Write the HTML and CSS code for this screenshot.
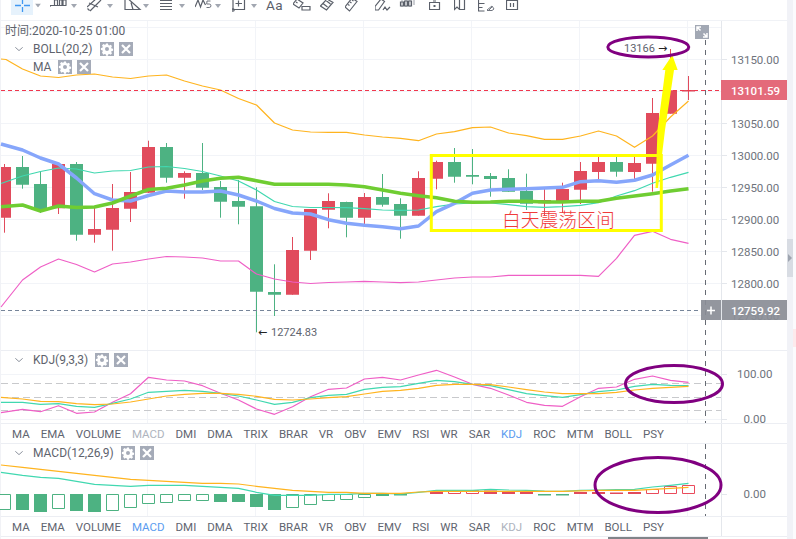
FILE: index.html
```html
<!DOCTYPE html>
<html lang="zh">
<head>
<meta charset="utf-8">
<title>K线图</title>
<link rel="stylesheet" href="styles.css">
</head>
<body>
<svg class="defs" width="0" height="0" aria-hidden="true">
  <symbol id="gear" viewBox="0 0 14 14">
    <path fill="#fff" fill-rule="evenodd" d="M6 1.6h2l.3 1.5 1 .4 1.3-.8 1.4 1.4-.8 1.3.4 1 1.5.3v2l-1.500.3-.4 1 .8 1.3-1.400 1.400-1.300-.8-1 .4-.3 1.500H6l-.3-1.500-1-.4-1.300.8L2 10.600l.8-1.300-.4-1L.9 8V6l1.500-.3.4-1L2 3.400 3.400 2l1.300.8 1-.4zM7 5a2 2 0 1 0 0 4 2 2 0 0 0 0-4z"/>
  </symbol>
  <symbol id="cross" viewBox="0 0 14 14">
    <path stroke="#fff" stroke-width="2.200" d="M3 3l8 8M11 3l-8 8"/>
  </symbol>
  <symbol id="chev" viewBox="0 0 8 4">
    <path fill="none" stroke="#8d939e" d="M.3.3L4 3.600 7.700.3"/>
  </symbol>
  <symbol id="caret" viewBox="0 0 6 4">
    <path fill="#a2a7b1" d="M0 0h6L3 4z"/>
  </symbol>
</svg>

<div class="app">
  <div class="main">
    <header class="toolbar">
      <svg class="tool" width="39" height="20" viewBox="0 0 39 20"><rect class="tool-active" width="22" height="15"/><path class="tool-blue" d="M4 5.500h6M13 5.500h6M11.500 0v4M11.500 7v5"/><use href="#caret" x="24" y="3.500" width="6" height="4"/></svg>
      <svg class="tool" width="37" height="20" viewBox="0 0 37 20"><path class="ink" d="M0 7v-2M.5 5.500h16M4.500 5V0h3v5M9.500 5V0h2.500v5M13 5V0h3v5"/><use href="#caret" x="21" y="4" width="6" height="4"/></svg>
      <svg class="tool" width="37" height="20" viewBox="0 0 37 20"><path class="ink" d="M0 7L10-2M3 11L14 0M2 3l9 4M.5 8.500l2 2"/><use href="#caret" x="20" y="4" width="6" height="4"/></svg>
      <svg class="tool" width="36" height="20" viewBox="0 0 36 20"><path class="ink" d="M1 -4V9.500H16L1-4M7 2.500l2 7"/><use href="#caret" x="19" y="4" width="6" height="4"/></svg>
      <svg class="tool" width="35" height="20" viewBox="0 0 35 20"><path class="ink" d="M0 .5h12M0 3.500h12M0 6.500h12M0 9.500h12"/><use href="#caret" x="19" y="4" width="6" height="4"/></svg>
      <svg class="tool" width="37" height="20" viewBox="0 0 37 20"><path class="ink" d="M0 7L3 0l2.500 7L8 0l2.500 5"/><path class="ink-thin" d="M15.500 1H12l-.3 3h2.500a1.500 1.500 0 0 1 0 3.500H11.500"/><use href="#caret" x="20" y="4" width="6" height="4"/></svg>
      <svg class="tool" width="34" height="20" viewBox="0 0 34 20"><path class="ink" d="M1 -1V9.500H12.500V-1M3.500 3.500h6.500M6.500 .5v6"/><circle class="ink" cx="1" cy="10" r="1.200"/><use href="#caret" x="19" y="4" width="6" height="4"/></svg>
      <span class="tool-text">Aa</span>
      <svg class="tool" width="27" height="20" viewBox="0 0 27 20"><path class="ink" d="M0 4L4-1l6 4-4 5zM3 2l1.500 1M5.500 0l1.500 1M9 10h8V6.500H9z"/></svg>
      <svg class="tool" width="25" height="20" viewBox="0 0 25 20"><path class="ink" d="M.5 6L7-1l6 3.500-6.500 7.500zM3 3.500l4.500 3.500M6 .5l4.500 3.500"/></svg>
      <svg class="tool" width="30" height="20" viewBox="0 0 30 20"><path class="ink" d="M0 7L7-2l5 3.500-7.500 9.500zM3 4.500l1.500 1M5 2l1.500 1M7 0l1.500 1"/></svg>
      <svg class="tool" width="22" height="20" viewBox="0 0 22 20"><path class="ink" d="M0 6.500L6-1l3.500 2.500-6 8.500H0zM8 10l2-3 2 3 3-3"/></svg>
      <svg class="tool" width="32" height="20" viewBox="0 0 32 20"><path class="ink-dot" d="M5 0v7M9 0v7M13 0v7M17 0v5"/><path class="ink" d="M3.500 2h3v4h-3zM7.500 1h3v5h-3zM11.500 1h3v5h-3z"/></svg>
      <svg class="tool" width="25" height="20" viewBox="0 0 25 20"><path class="ink" d="M.5 2.500h10v7H.5zM4 1h3"/><rect class="ink-fill" x="4.500" y="5" width="2" height="2"/></svg>
      <svg class="tool" width="24" height="20" viewBox="0 0 24 20"><path class="ink" d="M.5-2V9.500L3 7l2.500 2.500h5V-2M5.500 0v9"/></svg>
      <svg class="tool" width="28" height="20" viewBox="0 0 28 20"><path class="ink" d="M.5-1v12h6M.5 3.500h6M.5 7.500h4M10-1h5v1"/><path class="ink-thin" d="M9 10l5-4 2 3-2 1.500H9M11 10l3-3"/></svg>
      <svg class="tool" width="15" height="20" viewBox="0 0 15 20"><path class="ink" d="M.5.500h11v9H.5zM4.500 3v4M7.500 3v4"/></svg>
    </header>

    <section class="pane pane-main">
      <svg class="plot" width="787" height="329" viewBox="0 21 787 329">
        <path class="grid" d="M1 27.500H721M1 59.500H721M1 91.500H721M1 123.500H721M1 155.500H721M1 187.500H721M1 219.500H721M1 251.500H721M1 283.500H721M1 315.500H721M147.500 21V350M255.500 21V350M363.500 21V350M471.500 21V350M579.500 21V350M687.500 21V350"/>
        <path class="axis-line" d="M721.500 21V350"/>
        <path class="tick" d="M722 59.500h5M722 123.500h5M722 155.500h5M722 187.500h5M722 219.500h5M722 251.500h5M722 283.500h5"/>

        <path class="wick-red" d="M4.500 164V232.700M58.500 163V214M94.500 207V242.700M112.500 184V250.700M130.500 172V222M148.500 140.700V193M184.500 171.300V198.700M292.500 237V294.700M310.500 209V260M328.500 193.300V228.300M364.500 193V224.300M418.500 171.300V215.700M436.500 160.700V189.300M544.500 189V216M562.500 182.700V213M580.500 162V204M598.500 156.700V180M634.500 156.700V180M652.500 98V191.700M670.500 49V113.700M688.500 76V100"/>
        <path class="body-red" d="M1 167h10v50.700H1zM52 164h13v44.300H52zM88 229h13v5.700H88zM106 208h13v21.700H106zM124 192h13v16.700H124zM142 147h13v45.700H142zM178 173h13v4.700H178zM286 250h13v44.700H286zM304 209h13v41.700H304zM322 201h13v8.700H322zM358 197h13v20.700H358zM412 178h13v37.700H412zM430 162h13v16.700H430zM538 200h13v3.300H538zM556 189h13v12.700H556zM574 171h13v18.700H574zM592 162h13v10H592zM628 163h13v9H628zM646 113h13v50.700H646zM664 90.300h13v23.400H664zM682 90h13v1.500H682z"/>
        <path class="wick-green" d="M22.500 156V188.700M40.500 172V213M76.500 162V240.700M166.500 143V182.700M202.500 143V190M220.500 181V217.700M238.500 180V224.300M256.500 187.300V332.300M274.500 264.300V316M346.500 201.700V237.300M382.500 174V206.700M400.500 198.300V238.700M454.500 148V182.700M472.500 149V184.300M490.500 173V196.700M508.500 169.300V191.700M526.500 173.700V210M616.500 156.700V176.700"/>
        <path class="body-green" d="M16 167h13v17.700H16zM34 184h13v25.300H34zM70 164h13v70.700H70zM160 147h13v30.700H160zM196 173h13v14.700H196zM214 187h13v14.700H214zM232 201h13v5.700H232zM250 206.300h13v85.400H250zM268 292h13v2.700H268zM340 202h13v15.700H340zM376 197h13v7.700H376zM394 204h13v11.700H394zM448 162h13v14.700H448zM466 175h13v1.700H466zM484 176h13v3H484zM502 178h13v13.700H502zM520 191h13v12.700H520zM610 162h13v9.700H610z"/>

        <polyline class="line-orange" points="1,59 6,59.500 22.500,69 40.500,76 58.500,77.500 76.500,75 94.500,74 112.500,77 130.500,78.500 148.500,76 166.500,75 184.500,81 202.500,86 220.500,90 238.500,98.500 256.500,105 274.500,123 292.500,130 310.500,132 328.500,132.300 346.500,132.300 364.500,135 382.500,137 400.500,138.300 418.500,140.700 436.500,134 454.500,131.700 472.500,127.700 490.500,127 508.500,133 526.500,135.700 544.500,139.300 562.500,139.300 580.500,136 598.500,131 616.500,136 634.500,147.300 652.500,136 670.500,117 688.500,101"/>
        <polyline class="line-pink" points="1,307 22.500,280 40.500,267 58.500,259 76.500,264.500 94.500,272 112.500,264 130.500,262 148.500,259 166.500,256.500 184.500,257 202.500,258 220.500,261 238.500,261 256.500,274 274.500,279 292.500,282 310.500,283.500 328.500,282.500 346.500,282 364.500,281.300 382.500,282 400.500,282.700 418.500,282 436.500,280 454.500,278 472.500,277 490.500,277 508.500,275.300 526.500,275.300 544.500,275.300 562.500,275.300 580.500,275.300 598.500,276.300 616.500,258.300 634.500,235.300 652.500,231.300 670.500,239.300 688.500,243.300"/>
        <polyline class="line-teal" points="1,183.500 22.500,176 40.500,171.500 58.500,168 76.500,169 94.500,173 112.500,171 130.500,170.500 148.500,167 166.500,166.500 184.500,168.500 202.500,171.500 220.500,176 238.500,181 256.500,190 274.500,201.500 292.500,206.500 310.500,207.500 328.500,207.500 346.500,207.700 364.500,208.700 382.500,210 400.500,210.300 418.500,210 436.500,206.700 454.500,204 472.500,203 490.500,203 508.500,204.700 526.500,206.700 544.500,207.300 562.500,206.700 580.500,205.300 598.500,202.700 616.500,196 634.500,190.700 652.500,183.300 670.500,177.300 688.500,172.300"/>
        <polyline class="line-blue" points="1,144 22.500,150 40.500,158 58.500,164 76.500,178 94.500,193.700 112.500,200 130.500,201 148.500,195.500 166.500,191 184.500,192 202.500,192 220.500,191 238.500,195 256.500,201 274.500,208.500 292.500,213 310.500,214 328.500,219.700 346.500,223.300 364.500,225.300 382.500,226.700 400.500,228.700 418.500,226 436.500,211.700 454.500,203.300 472.500,193.300 490.500,190 508.500,189.300 526.500,188.700 544.500,188 562.500,187.300 580.500,181.700 598.500,180.700 616.500,182.300 634.500,180.300 652.500,175 670.500,165 688.500,155.300"/>
        <polyline class="line-green" points="1,206.700 22.500,205 40.500,211 58.500,206 76.500,207.500 94.500,207 112.500,203 130.500,196 148.500,189.500 166.500,188.300 184.500,185 202.500,181 220.500,178.300 238.500,177.300 256.500,180.700 274.500,184.300 292.500,184.300 310.500,184.300 328.500,184.300 346.500,185 364.500,186.700 382.500,190 400.500,193.300 418.500,195.700 436.500,197.700 454.500,201.300 472.500,202.300 490.500,202 508.500,201.300 526.500,201.300 544.500,202 562.500,202 580.500,201.300 598.500,201.300 616.500,198.300 634.500,196 652.500,193.700 670.500,191 688.500,188.700"/>

        <path class="dash-red" d="M1 90.500H721"/>
        <path class="dash-slate" d="M1 310.500H701"/>
        <path class="dash-dark" d="M705.500 40V350"/>

        <rect class="mark-box" x="431.300" y="155.500" width="230" height="75"/>
        <polygon class="mark-arrow" points="665.300,70 657.500,130 655.500,188 658,188 665,130 674,70 677.700,70 672.300,55 662.300,70"/>
        <ellipse class="mark-ring" cx="648.300" cy="47" rx="40.500" ry="10"/>

        <text class="val" x="624" y="52">13166</text>
        <text class="val-arrow" x="658" y="52">→</text>
        <text class="val-arrow" x="258" y="336">←</text>
        <text class="val" x="271" y="336">12724.83</text>

        <text class="tick-label" x="731" y="63.500">13150.00</text>
        <text class="tick-label" x="731" y="127.500">13050.00</text>
        <text class="tick-label" x="731" y="159.500">13000.00</text>
        <text class="tick-label" x="731" y="191.500">12950.00</text>
        <text class="tick-label" x="731" y="223.500">12900.00</text>
        <text class="tick-label" x="731" y="255.500">12850.00</text>
        <text class="tick-label" x="731" y="287.500">12800.00</text>
        <text class="tick-label" x="731" y="320">12750.00</text>

        <rect class="tag-red" x="721" y="80" width="66" height="20"/>
        <text class="tag-text" x="731" y="94.500">13101.59</text>
        <rect class="tag-gray" x="722" y="300" width="65" height="20"/>
        <rect class="tag-gray" x="701" y="300" width="20" height="20"/>
        <text class="tag-text" x="731" y="314.500">12759.92</text>
        <path class="tag-plus" d="M707 310.500h8M711 306.500v8"/>

        <rect class="btn-expand" x="695" y="25" width="14" height="14"/>
        <path class="btn-expand-glyph" d="M697 31v-4h4M707 33v4h-4M697.500 27.500l3 3M706.500 36.500l-3-3"/>
      </svg>
      <div class="overlay-time">时间:2020-10-25 01:00</div>
      <div class="legend legend-main">
        <div class="legend-row">
          <svg class="chev" width="8" height="4"><use href="#chev"/></svg>
          <span class="legend-name">BOLL(20,2)</span>
          <span class="legend-btn"><svg width="14" height="14"><use href="#gear"/></svg></span>
          <span class="legend-btn"><svg width="14" height="14"><use href="#cross"/></svg></span>
        </div>
        <div class="legend-row">
          <span class="chev-gap"></span>
          <span class="legend-name">MA</span>
          <span class="legend-btn"><svg width="14" height="14"><use href="#gear"/></svg></span>
          <span class="legend-btn"><svg width="14" height="14"><use href="#cross"/></svg></span>
        </div>
      </div>
      <div class="note">白天震荡区间</div>
    </section>

    <section class="pane pane-sub">
      <svg class="plot" width="787" height="72" viewBox="0 351 787 72">
        <path class="grid" d="M1 374.500H721M1 419.500H721M147.500 351V423M255.500 351V423M363.500 351V423M471.500 351V423M579.500 351V423M687.500 351V423"/>
        <path class="axis-line" d="M721.500 351V423"/>
        <path class="tick" d="M722 374.500h5M722 419.500h5"/>
        <path class="dash-gray" d="M1 383.500H721M1 397.500H721M1 410.500H721"/>
        <polyline class="line-pink" points="1,412.700 22.500,409.300 40.500,411.700 58.500,405.700 76.500,413.300 94.500,412 112.500,402.300 130.500,393.700 148.500,377.300 166.500,380 184.500,381 202.500,385.700 220.500,393.300 238.500,400 256.500,409 274.500,414.300 292.500,406.700 310.500,396.700 328.500,389.300 346.500,388 364.500,379 382.500,377.300 400.500,380 418.500,375 436.500,370.300 454.500,377 472.500,384.300 490.500,388.300 508.500,395 526.500,402.300 544.500,405.300 562.500,406.300 580.500,396.700 598.500,388.300 616.500,387 634.500,379.300 652.500,376 670.500,380.300 688.500,382.300"/>
        <polyline class="line-teal" points="1,402.300 22.500,402.300 40.500,404.300 58.500,403.700 76.500,406.300 94.500,407.300 112.500,403.300 130.500,399 148.500,392.300 166.500,391.300 184.500,390.300 202.500,391.300 220.500,393.300 238.500,396 256.500,400 274.500,404.300 292.500,402.300 310.500,397.700 328.500,395.300 346.500,394.300 364.500,389.300 382.500,387.300 400.500,386.700 418.500,383.300 436.500,380.300 454.500,381.700 472.500,384.300 490.500,385.700 508.500,389.700 526.500,393.700 544.500,395.700 562.500,397.300 580.500,394.700 598.500,391.700 616.500,390 634.500,386.300 652.500,384.300 670.500,385.300 688.500,385.700"/>
        <polyline class="line-orange" points="1,397.300 22.500,399 40.500,401.300 58.500,401.700 76.500,403.700 94.500,404.700 112.500,404 130.500,402 148.500,399 166.500,396 184.500,394.300 202.500,393.300 220.500,393.300 238.500,394.300 256.500,396.300 274.500,399.300 292.500,400 310.500,399 328.500,397.700 346.500,396.700 364.500,394 382.500,391.300 400.500,390.300 418.500,388.300 436.500,385.300 454.500,384.300 472.500,384.300 490.500,384.700 508.500,387 526.500,389.700 544.500,392 562.500,393.700 580.500,393.700 598.500,393.700 616.500,392.300 634.500,390 652.500,388.300 670.500,387.300 688.500,386.300"/>
        <path class="dash-dark" d="M705.500 351V423"/>
        <ellipse class="mark-ring" cx="674" cy="384" rx="48.500" ry="18.500"/>
        <text class="tick-label" x="737" y="378">100.00</text>
        <text class="tick-label" x="743.500" y="423">0.00</text>
      </svg>
      <div class="legend legend-sub">
        <div class="legend-row">
          <svg class="chev" width="8" height="4"><use href="#chev"/></svg>
          <span class="legend-name">KDJ(9,3,3)</span>
          <span class="legend-btn"><svg width="14" height="14"><use href="#gear"/></svg></span>
          <span class="legend-btn"><svg width="14" height="14"><use href="#cross"/></svg></span>
        </div>
      </div>
    </section>

    <nav class="tabs">
      <span>MA</span><span>EMA</span><span>VOLUME</span><span class="tab-muted">MACD</span><span>DMI</span><span>DMA</span><span>TRIX</span><span>BRAR</span><span>VR</span><span>OBV</span><span>EMV</span><span>RSI</span><span>WR</span><span>SAR</span><span class="tab-active">KDJ</span><span>ROC</span><span>MTM</span><span>BOLL</span><span>PSY</span>
    </nav>

    <section class="pane pane-sub">
      <svg class="plot" width="787" height="72" viewBox="0 444 787 72">
        <path class="grid" d="M147.500 444V516M255.500 444V516M363.500 444V516M471.500 444V516M579.500 444V516M687.500 444V516"/>
        <path class="axis-line" d="M721.500 444V516"/>
        <path class="tick" d="M722 494.500h5"/>
        <path class="hist-open-green" d="M-2 494.500h12.500v15H-2zM52.500 494.500h12v14h-12zM106.500 494.500h12v16h-12zM124.500 494.500h12v13h-12zM142.500 494.500h12v9h-12zM160.500 494.500h12v8h-12zM178.500 494.500h12v6h-12zM196.500 494.500h12v6h-12zM286.500 494.500h12v13h-12zM304.500 494.500h12v10h-12zM322.500 494.500h12v6h-12zM340.500 494.500h12v5h-12zM358.500 494.500h12v3h-12z"/>
        <path class="body-green" d="M16 494h13v16H16zM34 494h13v18H34zM70 494h13v17H70zM88 494h13v18H88zM214 494h13v8H214zM232 494h13v8H232zM250 494h13v13H250zM268 494h13v16H268zM376 494h13v2H376zM394 494h13v1.500H394zM538 494h13v1.500H538zM556 494h13v1.500H556z"/>
        <path class="body-red" d="M430 492h13v2H430zM484 490.500h13v3.500H484zM502 492h13v2H502zM520 492h13v2H520zM574 492h13v2H574zM592 492h13v2H592zM610 492.500h13v1.500H610zM628 492h13v2H628z"/>
        <path class="hist-open-red" d="M448.500 490.500h12v3h-12zM466.500 490.500h12v3h-12zM646.500 489.500h12v4h-12zM664.500 486.500h12v7h-12zM682.500 485.500h12v8h-12z"/>
        <polyline class="line-teal" points="1,472.300 22.500,475.300 40.500,477.300 58.500,478.300 76.500,481.300 94.500,484.300 112.500,485.300 130.500,486.300 148.500,485.300 166.500,485.300 184.500,485.300 202.500,486.300 220.500,487.300 238.500,488.300 256.500,492.300 274.500,495.300 292.500,495.300 310.500,495.300 328.500,494.300 346.500,494.300 364.500,493.300 382.500,493.300 400.500,494 418.500,492.300 436.500,490.300 454.500,490.300 472.500,490.300 490.500,489.300 508.500,490 526.500,490.300 544.500,491 562.500,491.300 580.500,490.300 598.500,490 616.500,489.500 634.500,489.300 652.500,487 670.500,485.300 688.500,483.300"/>
        <polyline class="line-orange" points="1,465 22.500,467.300 40.500,469.300 58.500,471.300 76.500,473.300 94.500,475.300 112.500,477.300 130.500,479.300 148.500,480.300 166.500,481.300 184.500,482.300 202.500,483.300 220.500,483.300 238.500,484 256.500,486.300 274.500,488.300 292.500,490.300 310.500,491.300 328.500,492.300 346.500,492.300 364.500,493.300 382.500,493.300 400.500,493.300 418.500,492 436.500,491.300 454.500,491.300 472.500,491.300 490.500,491.300 508.500,491.300 526.500,491.300 544.500,491.300 562.500,491.300 580.500,490.800 598.500,490.300 616.500,490.300 634.500,490.300 652.500,489.300 670.500,488.300 688.500,487.300"/>
        <path class="dash-dark" d="M705.500 444V516"/>
        <ellipse class="mark-ring" cx="658" cy="485" rx="63" ry="27.500"/>
        <text class="tick-label" x="743.500" y="498">0.00</text>
      </svg>
      <div class="legend legend-sub">
        <div class="legend-row">
          <svg class="chev" width="8" height="4"><use href="#chev"/></svg>
          <span class="legend-name">MACD(12,26,9)</span>
          <span class="legend-btn"><svg width="14" height="14"><use href="#gear"/></svg></span>
          <span class="legend-btn"><svg width="14" height="14"><use href="#cross"/></svg></span>
        </div>
      </div>
    </section>

    <nav class="tabs">
      <span>MA</span><span>EMA</span><span>VOLUME</span><span class="tab-active">MACD</span><span>DMI</span><span>DMA</span><span>TRIX</span><span>BRAR</span><span>VR</span><span>OBV</span><span>EMV</span><span>RSI</span><span>WR</span><span>SAR</span><span class="tab-muted">KDJ</span><span>ROC</span><span>MTM</span><span>BOLL</span><span>PSY</span>
    </nav>

    <div class="scrollbar"><div class="scrollbar-thumb"></div></div>
  </div>

  <aside class="gutter">
    <div class="gutter-strip">
      <div class="handle"></div>
    </div>
    <div class="gutter-edge"><div class="edge-pink"></div></div>
  </aside>
</div>
</body>
</html>
```

FILE: styles.css
```css
* { box-sizing: border-box; }
html, body { margin: 0; padding: 0; background: #fff; }
body { width: 796px; height: 539px; overflow: hidden; font-family: Roboto, "Noto Sans CJK SC", sans-serif; color: #5e636d; }
.defs { position: absolute; }
.app { display: flex; width: 796px; height: 539px; }
.main { width: 787px; flex: none; display: flex; flex-direction: column; border-left: 1px solid #f1f2f6; }
.gutter { flex: 1; display: flex; }
.gutter-strip { width: 6px; background: #f1f2f7; padding-top: 239px; }
.handle { width: 6px; height: 38px; background: #d8dce3; display: flex; align-items: center; }
.handle::after { content: ""; border-left: 4px solid #9ea4af; border-top: 4px solid transparent; border-bottom: 4px solid transparent; margin-left: 1px; }
.gutter-edge { flex: 1; background: #fbfbfd; padding-top: 329px; }
.edge-pink { height: 18px; background: #fdeaec; }

.toolbar { height: 21px; display: flex; align-items: flex-start; padding-left: 10px; border-bottom: 1px solid #f0f2f6; overflow: hidden; flex: none; }
.tool { display: block; flex: none; }
.tool-active { fill: #e6f2fc; }
.tool-blue { stroke: #3f97f2; stroke-width: 1.300; fill: none; }
.ink { stroke: #5b606a; stroke-width: 1.200; fill: none; }
.ink-thin { stroke: #70757f; stroke-width: 1; fill: none; }
.ink-dot { stroke: #9a9ea7; stroke-width: 1; fill: none; }
.ink-fill { fill: #5b606a; }
.tool-text { width: 27px; flex: none; font-size: 13.500px; line-height: 11px; height: 20px; color: #5b606a; letter-spacing: .5px; }

.pane { position: relative; flex: none; border-bottom: 1px solid #eceef3; }
.pane-main { height: 330px; }
.pane-sub { height: 73px; }
.plot { display: block; margin-left: -1px; overflow: visible; }

.grid { stroke: #f2f4f8; stroke-width: 1; fill: none; }
.axis-line { stroke: #e4e7ec; stroke-width: 1; fill: none; }
.tick { stroke: #e4e7ec; stroke-width: 1; fill: none; }
.wick-red { stroke: #e14b5c; stroke-width: 1; fill: none; }
.wick-green { stroke: #4db282; stroke-width: 1; fill: none; }
.body-red { fill: #e14b5c; }
.body-green { fill: #4db282; }
.hist-open-green { fill: #fff; stroke: #4db282; stroke-width: 1; }
.hist-open-red { fill: #fff; stroke: #ea4b5c; stroke-width: 1; }
polyline { fill: none; stroke-linejoin: round; }
.line-orange { stroke: #ffb41f; stroke-width: 1.200; }
.line-pink { stroke: #ef5fc6; stroke-width: 1.200; }
.line-teal { stroke: #41d8b0; stroke-width: 1.200; }
.line-blue { stroke: #86a6fb; stroke-width: 3.500; }
.line-green { stroke: #6fcd32; stroke-width: 3.500; }
.dash-red { stroke: #f0374d; stroke-width: 1; stroke-dasharray: 4 3; fill: none; }
.dash-slate { stroke: #76859a; stroke-width: 1; stroke-dasharray: 4 3; fill: none; }
.dash-dark { stroke: #666b73; stroke-width: 1; stroke-dasharray: 5 5; fill: none; }
.dash-gray { stroke: #c8c9cc; stroke-width: 1; stroke-dasharray: 7 4; fill: none; }
.mark-box { fill: none; stroke: #ffff00; stroke-width: 3; }
.mark-arrow { fill: #ffff00; }
.mark-ring { fill: none; stroke: #800080; stroke-width: 3; }
.val { font-size: 11px; fill: #5e636d; }
.val-arrow { font-size: 11px; fill: #222; font-family: "DejaVu Sans", sans-serif; }
.tick-label { font-size: 11.500px; fill: #6e737c; }
.tag-red { fill: #e46a7a; }
.tag-gray { fill: #8a8d96; fill-opacity: .92; }
.tag-text { font-size: 11.500px; font-weight: 500; fill: #fff; }
.tag-plus { stroke: #fff; stroke-width: 1.500; fill: none; }
.btn-expand { fill: #a2a8b4; }
.btn-expand-glyph { stroke: #fff; stroke-width: 1.500; fill: none; }

.overlay-time { position: absolute; left: 4px; top: 2px; font-size: 12px; line-height: 16px; color: #5e636d; white-space: nowrap; }
.legend { position: absolute; left: 14px; display: flex; flex-direction: column; }
.legend-main { top: 21px; gap: 4px; }
.legend-sub { top: 2px; }
.legend-row { display: flex; align-items: center; height: 14px; }
.chev { margin-right: 10px; flex: none; }
.chev-gap { width: 18px; flex: none; }
.legend-name { font-size: 12px; line-height: 14px; color: #5e636d; margin-right: 7px; white-space: nowrap; }
.legend-btn { width: 14px; height: 14px; background: #a5abb8; margin-right: 5px; display: block; flex: none; }
.legend-btn svg { display: block; }
.note { position: absolute; left: 501px; top: 189px; font-size: 18.800px; line-height: 22px; color: #f03b3b; white-space: nowrap; font-weight: 300; }

.tabs { height: 20px; flex: none; width: 786px; display: flex; gap: 11px; align-items: center; padding-left: 11px; font-size: 11.500px; color: #5f6570; border-bottom: 1px solid #eceef3; background: linear-gradient(#e4e7ec, #e4e7ec) 720px 0 / 1px 100% no-repeat; }
.tab-active { color: #5b9cf0; }
.tab-muted { color: #aeb4be; }

.scrollbar { flex: 1; position: relative; }
.scrollbar-thumb { position: absolute; left: 607px; top: 0; width: 100px; height: 2px; background: #808489; }
```
